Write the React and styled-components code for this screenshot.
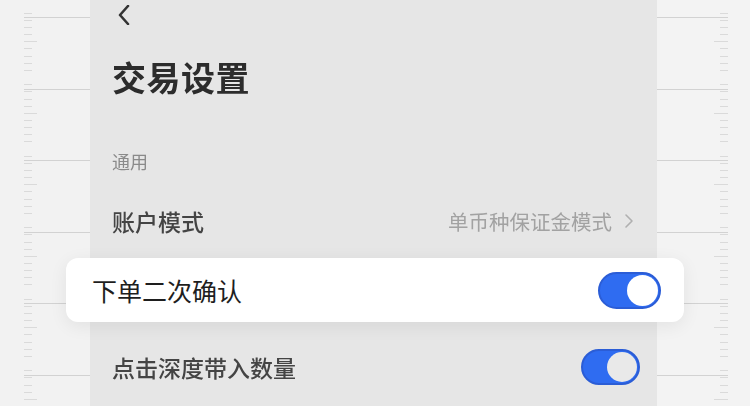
import React from "react";
import styled, { createGlobalStyle } from "styled-components";

const GlobalStyle = createGlobalStyle`
  html, body {
    margin: 0;
    padding: 0;
    background: #f3f3f3;
    font-family: "Noto Sans CJK SC", "Noto Sans", sans-serif;
  }
`;

const PERIOD = 71.5;
const FIRST_LINE = 17;

const Ruler = ({ side }) => {
  const lines = [];
  for (let i = 0; i < 6; i++) lines.push(FIRST_LINE + i * PERIOD);
  const ticks = [];
  for (let i = 0; i < 60; i++) {
    const y = FIRST_LINE - 4.3 + i * 7.15;
    if (y > 406) break;
    if (i % 10 === 9) continue;
    ticks.push({ y, long: i % 10 === 4 });
  }
  const left = side === "left";
  return (
    <RulerBox $side={side}>
      <svg width="100%" height="406" viewBox={left ? "0 0 90 406" : "0 0 93 406"}>
        {lines.map((y) => (
          <line
            key={"l" + y}
            x1={left ? 24 : 0}
            x2={left ? 90 : 71}
            y1={Math.round(y) + 0.5}
            y2={Math.round(y) + 0.5}
            stroke="#d2d2d2"
            strokeWidth="1"
          />
        ))}
        {ticks.map((t) => (
          <line
            key={"t" + t.y}
            x1={left ? 24 : t.long ? 57 : 63}
            x2={left ? (t.long ? 37 : 32) : 71}
            y1={Math.round(t.y) + 0.5}
            y2={Math.round(t.y) + 0.5}
            stroke="#dadada"
            strokeWidth="1"
          />
        ))}
      </svg>
    </RulerBox>
  );
};

const Toggle = ({ $muted, $big }) => (
  <Track $big={$big}>
    <Knob $muted={$muted} $big={$big} />
  </Track>
);

const App = () => {
  return (
    <>
      <GlobalStyle />
      <Page>
        <Ruler side="left" />
        <Panel>
          <Back>
            <svg width="14" height="20" viewBox="0 0 14 20">
              <path d="M11 1 L3 10 L11 19" fill="none" stroke="#333" strokeWidth="2.6" strokeLinecap="round" strokeLinejoin="round" />
            </svg>
          </Back>
          <Title>交易设置</Title>
          <Section>通用</Section>
          <Row>
            <Label>账户模式</Label>
            <Value>
              单币种保证金模式
              <svg width="10" height="16" viewBox="0 0 10 16">
                <path d="M2 2 L8 8 L2 14" fill="none" stroke="#b0b0b0" strokeWidth="1.6" strokeLinecap="round" strokeLinejoin="round" />
              </svg>
            </Value>
          </Row>
          {/* this row is covered by the floating card */}
          <Row />
          <Row>
            <Label>点击深度带入数量</Label>
            <Toggle $muted />
          </Row>
        </Panel>
        <Ruler side="right" />
        <FloatCard>
          <CardLabel>下单二次确认</CardLabel>
          <Toggle $big />
        </FloatCard>
      </Page>
    </>
  );
};

export default App;

const Page = styled.div`
  position: relative;
  width: 750px;
  height: 406px;
  display: flex;
  overflow: hidden;
  background: #f3f3f3;
`;

const RulerBox = styled.div`
  width: ${(p) => (p.$side === "left" ? "90px" : "93px")};
  flex-shrink: 0;
  background: ${(p) => (p.$side === "left" ? "#f2f2f2" : "#f3f3f3")};
  svg {
    display: block;
  }
`;

const Panel = styled.div`
  width: 567px;
  flex-shrink: 0;
  background: #e6e6e6;
  display: flex;
  flex-direction: column;
  padding-left: 22px;
  box-sizing: border-box;
  filter: blur(0.5px);
  & > * {
    flex-shrink: 0;
  }
`;

const Back = styled.div`
  height: 30px;
  display: flex;
  align-items: center;
  padding-left: 5px;
  svg {
    display: block;
  }
`;

const Title = styled.div`
  margin-top: 24px;
  font-size: 34px;
  line-height: 46px;
  font-weight: 700;
  color: #2c2c2c;
  letter-spacing: 0.5px;
`;

const Section = styled.div`
  margin-top: 48px;
  margin-bottom: 10px;
  font-size: 18px;
  line-height: 26px;
  color: #8a8a8a;
`;

const Row = styled.div`
  height: 73px;
  display: flex;
  align-items: center;
  justify-content: space-between;
  padding-right: 17px;
`;

const Label = styled.div`
  font-size: 23px;
  font-weight: 500;
  color: #444;
`;

const Value = styled.div`
  display: flex;
  align-items: center;
  gap: 12px;
  font-size: 20.5px;
  color: #a2a2a2;
  padding-right: 6px;
  svg {
    display: block;
  }
`;

const Track = styled.div`
  width: ${(p) => (p.$big ? "63px" : "59px")};
  height: ${(p) => (p.$big ? "37px" : "36px")};
  border-radius: 20px;
  background: #2f6cf1;
  border: 2px solid #2b5dd6;
  box-sizing: border-box;
  display: flex;
  align-items: center;
  justify-content: flex-end;
  padding-right: 1px;
`;

const Knob = styled.div`
  width: ${(p) => (p.$big ? "31px" : "30px")};
  height: ${(p) => (p.$big ? "31px" : "30px")};
  border-radius: 50%;
  background: ${(p) => (p.$muted ? "#e9e9e9" : "#ffffff")};
`;

const FloatCard = styled.div`
  position: absolute;
  left: 66px;
  top: 258px;
  width: 618px;
  height: 64px;
  box-sizing: border-box;
  background: #ffffff;
  border-radius: 12px;
  box-shadow: 0 4px 18px rgba(0, 0, 0, 0.07);
  display: flex;
  align-items: center;
  justify-content: space-between;
  padding: 0 23px 0 26px;
`;

const CardLabel = styled.div`
  font-size: 25px;
  font-weight: 400;
  color: #1e1e1e;
`;
